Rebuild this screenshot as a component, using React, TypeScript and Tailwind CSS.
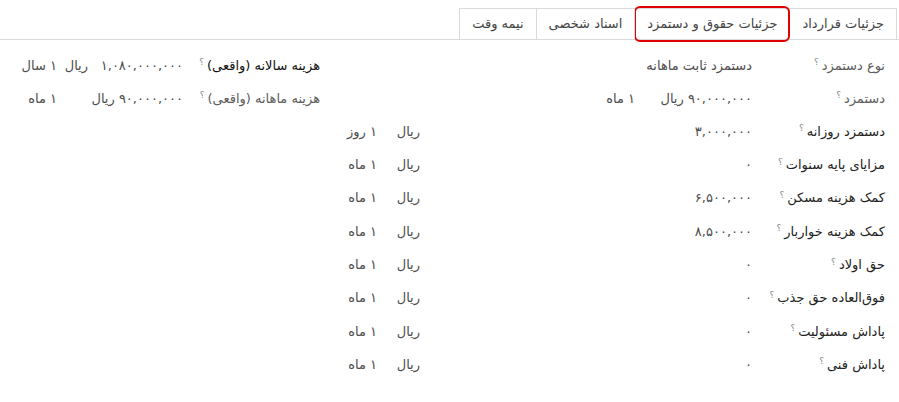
import React from "react";

const tabs = [
  { label: "جزئیات قرارداد", active: false },
  { label: "جزئیات حقوق و دستمزد", active: true },
  { label: "اسناد شخصی", active: false },
  { label: "نیمه وقت", active: false },
];

const allowances = [
  { label: "دستمزد روزانه", amount: "۳,۰۰۰,۰۰۰", per: "۱ روز" },
  { label: "مزایای پایه سنوات", amount: "۰", per: "۱ ماه" },
  { label: "کمک هزینه مسکن", amount: "۶,۵۰۰,۰۰۰", per: "۱ ماه" },
  { label: "کمک هزینه خواربار", amount: "۸,۵۰۰,۰۰۰", per: "۱ ماه" },
  { label: "حق اولاد", amount: "۰", per: "۱ ماه" },
  { label: "فوق‌العاده حق جذب", amount: "۰", per: "۱ ماه" },
  { label: "پاداش مسئولیت", amount: "۰", per: "۱ ماه" },
  { label: "پاداش فنی", amount: "۰", per: "۱ ماه" },
];

const Hint = () => (
  <sup className="mr-[3px] text-[9px] text-[#8a8a8a] font-normal">؟</sup>
);

const App = () => {
  return (
    <div
      dir="rtl"
      className="w-full h-[402px] bg-white text-[13px] text-[#4c4c4c] overflow-hidden whitespace-nowrap"
      style={{ fontFamily: '"DejaVu Sans", sans-serif' }}
    >
      {/* tabs */}
      <div className="pt-2 pr-[2px] border-b border-[#d8dadd] flex">
        {tabs.map((tab) => (
          <div
            key={tab.label}
            className="relative h-[31px] px-3 flex items-center border border-b-0 border-[#d8dadd] -ml-px bg-white text-[#444]"
          >
            {tab.label}
            {tab.active && (
              <div className="absolute -inset-x-[1px] -top-[3px] -bottom-[3px] border-2 border-[#e00000] rounded-[6px]" />
            )}
          </div>
        ))}
      </div>

      {/* top groups */}
      <div className="flex pt-[9px]">
        <div className="w-[565px]">
          <div className="flex items-center h-[33px]">
            <div className="w-[147px] pr-[14px] text-[#5c5c5c]">
              نوع دستمزد<Hint />
            </div>
            <div>دستمزد ثابت ماهانه</div>
          </div>
          <div className="flex items-center h-[33px]">
            <div className="w-[147px] pr-[14px] text-[#5c5c5c]">
              دستمزد<Hint />
            </div>
            <div className="w-[117px]">۹۰,۰۰۰,۰۰۰ ریال</div>
            <div>۱ ماه</div>
          </div>
        </div>
        <div className="flex-1">
          <div className="flex items-center h-[33px]">
            <div className="w-[151px] pr-[14px] text-[#111]">
              هزینه سالانه (واقعی)<Hint />
            </div>
            <div className="w-[95px]">۱,۰۸۰,۰۰۰,۰۰۰</div>
            <div className="w-[31px]">ریال</div>
            <div>۱ سال</div>
          </div>
          <div className="flex items-center h-[33px]">
            <div className="w-[151px] pr-[14px] text-[#5c5c5c]">
              هزینه ماهانه (واقعی)<Hint />
            </div>
            <div className="w-[126px]">۹۰,۰۰۰,۰۰۰ ریال</div>
            <div>۱ ماه</div>
          </div>
        </div>
      </div>

      {/* allowance rows */}
      <div>
        {allowances.map((row) => (
          <div key={row.label} className="flex items-center h-[33.3px]">
            <div className="w-[147px] pr-[14px] text-[#222]">
              {row.label}
              <Hint />
            </div>
            <div className="w-[332px]">{row.amount}</div>
            <div className="w-[43px]">ریال</div>
            <div>{row.per}</div>
          </div>
        ))}
      </div>
    </div>
  );
};

export default App;
